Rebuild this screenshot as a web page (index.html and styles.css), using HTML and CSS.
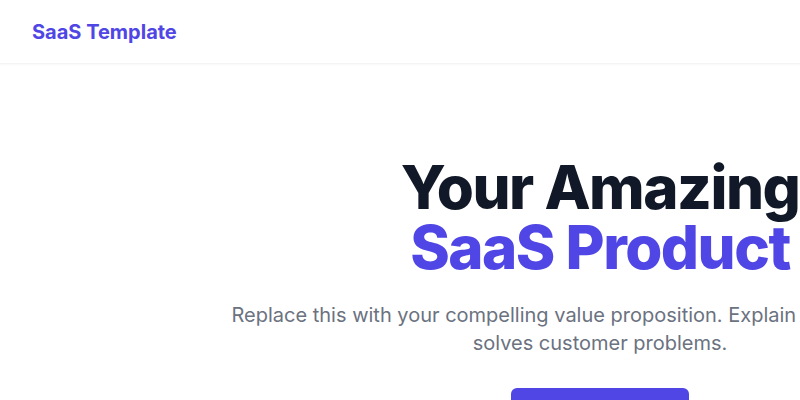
FILE: index.html
```html
<!DOCTYPE html>
<html lang="en">
<head>
<meta charset="utf-8">
<title>SaaS Template</title>
<link rel="stylesheet" href="styles.css">
</head>
<body>
<header class="site-header">
  <div class="header-inner">
    <a class="logo" href="#">SaaS Template</a>
  </div>
</header>
<main class="hero">
  <h1 class="hero-title">Your Amazing<br><span class="accent">SaaS Product</span></h1>
  <p class="hero-sub">Replace this with your compelling value proposition. Explain how your product solves customer problems.</p>
  <div class="hero-actions">
    <a class="btn-primary" href="#">Get Started Free</a>
  </div>
</main>
</body>
</html>
```
FILE: styles.css
```css
* { box-sizing: border-box; }
html, body { margin: 0; padding: 0; background: #ffffff; }
body {
  font-family: Inter, "Noto Sans", sans-serif;
  color: #111827;
}
.site-header {
  height: 64px;
  border-bottom: 1px solid #f3f4f6;
  box-shadow: 0 1px 2px rgba(0,0,0,0.03);
}
.header-inner {
  height: 63px;
  padding: 0 32px;
  display: flex;
  align-items: center;
}
.logo {
  font-size: 20px;
  line-height: 28px;
  font-weight: 700;
  color: #4f46e5;
  text-decoration: none;
}
.hero {
  width: 1200px;
  padding: 93px 16px 0;
  text-align: center;
}
.hero-title {
  margin: 0;
  font-size: 60px;
  line-height: 60px;
  font-weight: 800;
  letter-spacing: -0.025em;
  color: #111827;
}
.accent { color: #4f46e5; }
.hero-sub {
  max-width: 768px;
  margin: 24px auto 0;
  font-size: 20px;
  line-height: 28px;
  color: #6b7280;
}
.hero-actions {
  margin-top: 31px;
  display: flex;
  justify-content: center;
}
.btn-primary {
  display: inline-block;
  width: 178px;
  padding: 16px 0;
  border-radius: 6px;
  background: #4f46e5;
  color: #fff;
  font-size: 18px;
  font-weight: 600;
  text-decoration: none;
}
```
